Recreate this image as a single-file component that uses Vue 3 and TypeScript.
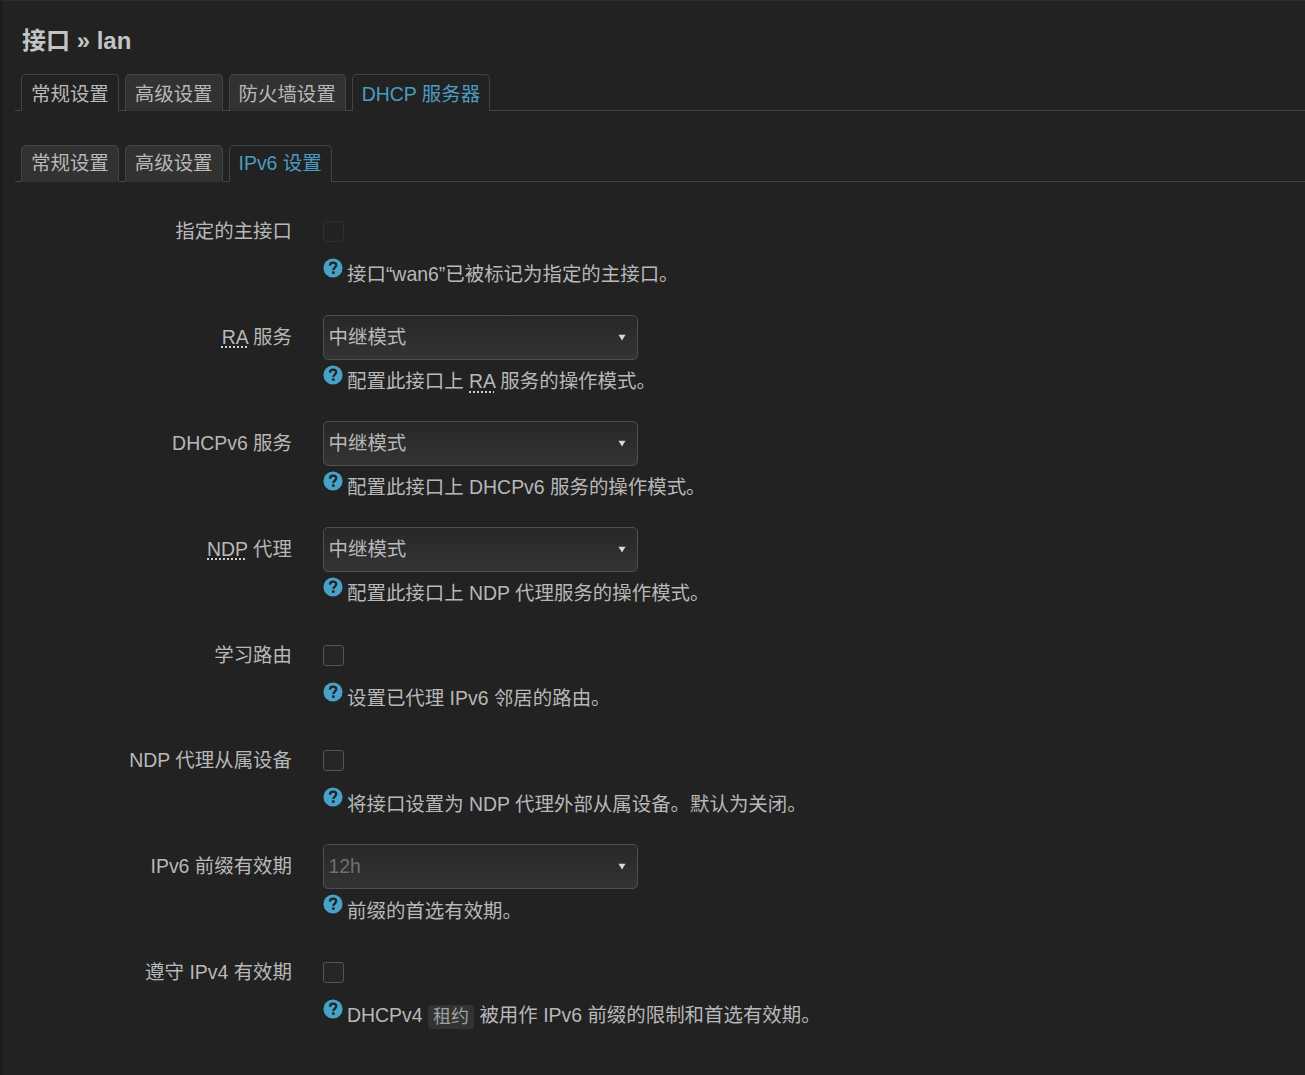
<script setup lang="ts">
interface Part { t: string; abbr?: boolean; code?: boolean }
interface Row {
  label: Part[];
  kind: 'check' | 'check-faint' | 'select' | 'select-off';
  value?: string;
  help: Part[];
}
const topTabs = ['常规设置', '高级设置', '防火墙设置', 'DHCP 服务器'];
const subTabs = ['常规设置', '高级设置', 'IPv6 设置'];
const rows: Row[] = [
  { label: [{ t: '指定的主接口' }], kind: 'check-faint', help: [{ t: '接口“wan6”已被标记为指定的主接口。' }] },
  { label: [{ t: 'RA', abbr: true }, { t: ' 服务' }], kind: 'select', value: '中继模式', help: [{ t: '配置此接口上 ' }, { t: 'RA', abbr: true }, { t: ' 服务的操作模式。' }] },
  { label: [{ t: 'DHCPv6 服务' }], kind: 'select', value: '中继模式', help: [{ t: '配置此接口上 DHCPv6 服务的操作模式。' }] },
  { label: [{ t: 'NDP', abbr: true }, { t: ' 代理' }], kind: 'select', value: '中继模式', help: [{ t: '配置此接口上 NDP 代理服务的操作模式。' }] },
  { label: [{ t: '学习路由' }], kind: 'check', help: [{ t: '设置已代理 IPv6 邻居的路由。' }] },
  { label: [{ t: 'NDP 代理从属设备' }], kind: 'check', help: [{ t: '将接口设置为 NDP 代理外部从属设备。默认为关闭。' }] },
  { label: [{ t: 'IPv6 前缀有效期' }], kind: 'select-off', value: '12h', help: [{ t: '前缀的首选有效期。' }] },
  { label: [{ t: '遵守 IPv4 有效期' }], kind: 'check', help: [{ t: 'DHCPv4 ' }, { t: '租约', code: true }, { t: ' 被用作 IPv6 前缀的限制和首选有效期。' }] },
];
</script>

<template>
  <div class="page">
    <h2 class="title">接口 » lan</h2>
    <ul class="tabs top">
      <li v-for="(t, i) in topTabs" :key="t" class="tab" :class="{ active: i === 3, dim: i === 0 }">{{ t }}</li>
    </ul>
    <ul class="tabs sub">
      <li v-for="(t, i) in subTabs" :key="t" class="tab" :class="{ active: i === 2 }">{{ t }}</li>
    </ul>
    <div class="form">
      <div v-for="(r, i) in rows" :key="i" class="row">
        <div class="label">
          <template v-for="(p, j) in r.label" :key="j"><abbr v-if="p.abbr">{{ p.t }}</abbr><template v-else>{{ p.t }}</template></template>
        </div>
        <div class="field">
          <div class="control">
            <span v-if="r.kind === 'check' || r.kind === 'check-faint'" class="check" :class="{ faint: r.kind === 'check-faint' }"></span>
            <div v-else class="select" :class="{ off: r.kind === 'select-off' }">
              <span class="value">{{ r.value }}</span>
              <svg class="caret" width="8" height="7" viewBox="0 0 8 7"><path d="M0.5 0.8H7.5L4 6.4Z" fill="#d8d8d8" /></svg>
            </div>
          </div>
          <div class="help" :class="{ loose: r.kind === 'check' || r.kind === 'check-faint' }">
            <svg class="q" width="20" height="20" viewBox="0 0 20 20">
              <circle cx="10" cy="10" r="9.6" fill="#47a2c9" />
              <path d="M6.9 7.6C7 5.7 8.3 4.7 10.1 4.7C11.9 4.7 13.2 5.8 13.2 7.3C13.2 9.5 10.3 9.6 10.3 12" fill="none" stroke="#222" stroke-width="2.3" />
              <rect x="9" y="13.3" width="2.6" height="2.5" fill="#222" />
            </svg>
            <span class="help-text"><template v-for="(p, j) in r.help" :key="j"><abbr v-if="p.abbr">{{ p.t }}</abbr><code v-else-if="p.code">{{ p.t }}</code><template v-else>{{ p.t }}</template></template></span>
          </div>
        </div>
      </div>
    </div>
  </div>
</template>

<style>
html, body { margin: 0; background: #222; }
</style>

<style scoped>
.page {
  box-sizing: border-box;
  height: 1075px;
  overflow: hidden;
  background: #222;
  border-left: 2px solid #1b1b1b;
  border-top: 1px solid #2b2b2b;
  padding: 0 0 0 13px;
  color: #b8b8b8;
  font-family: "Liberation Sans", "Noto Sans CJK SC", sans-serif;
  font-size: 19.45px;
}
.title {
  margin: 0;
  padding: 24px 0 0 7px;
  height: 49px;
  font-size: 24px;
  line-height: 31px;
  font-weight: 700;
  color: #c4c4c4;
}
.tabs {
  list-style: none;
  display: flex;
  gap: 6px;
  margin: 0;
  padding: 0 0 0 6px;
  height: 37px;
  box-sizing: border-box;
  border-bottom: 1px solid #444;
}
.tabs.sub { margin-top: 34px; }
.tab {
  box-sizing: border-box;
  height: 37px;
  padding: 0 9px;
  background: #323232;
  border: 1px solid #444;
  border-bottom: 0;
  border-radius: 5px 5px 0 0;
  color: #b8b8b8;
  white-space: nowrap;
}
.top .tab { line-height: 38px; }
.sub .tab { line-height: 34px; }
.tab.dim { background: #222; }
.tab.active {
  background: #222;
  color: #4a9dc0;
  position: relative;
  z-index: 1;
}
.form { padding-top: 27.15px; }
.row {
  display: grid;
  grid-template-columns: 277px 1fr;
  column-gap: 31px;
  height: 105.85px;
}
.label {
  text-align: right;
  height: 45px;
  line-height: 53px;
  margin-top: -4px;
  white-space: nowrap;
}
.control {
  height: 45px;
  margin-top: -4px;
  display: flex;
  align-items: center;
}
.check {
  display: block;
  box-sizing: border-box;
  width: 21px;
  height: 21px;
  margin-top: 8px;
  border: 1px solid #555;
  border-radius: 3px;
  background: #262626;
}
.check.faint { border-color: #2f2f2f; background: #232323; }
.select {
  box-sizing: border-box;
  width: 315px;
  height: 45px;
  margin-top: 8px;
  padding: 0 11px 0 5px;
  display: flex;
  align-items: center;
  justify-content: space-between;
  border: 1px solid #4f4f4f;
  border-radius: 5px;
  background: linear-gradient(#272727, #343434);
  color: #b8b8b8;
}
.value { position: relative; top: -2px; left: -0.5px; }
.select.off { color: #707070; }
.select.off .value { top: 0; }
.caret { display: block; margin-top: 0; }
.help {
  display: flex;
  align-items: flex-start;
  gap: 4px;
  margin-top: 8px;
  line-height: 28px;
}
.help.loose { margin-top: 7px; }
.q { flex: none; margin-top: 1px; }
.help-text { margin-top: 3.3px; white-space: nowrap; }
abbr {
  text-decoration: underline dotted #d0d0d0;
  text-underline-offset: 3px;
  text-decoration-thickness: 1.5px;
  text-decoration-skip-ink: none;
}
code {
  font-family: "Liberation Sans", "Noto Sans CJK SC", sans-serif;
  font-size: 18px;
  color: #a0a0a0;
  background: #333;
  padding: 2px 5px;
  border-radius: 4px;
  position: relative;
  top: 1px;
}
</style>
